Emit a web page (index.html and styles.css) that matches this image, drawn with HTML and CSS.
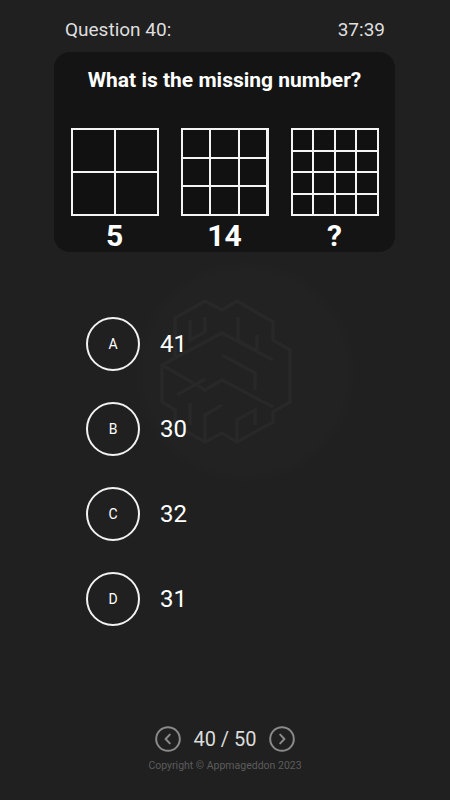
FILE: index.html
```html
<!DOCTYPE html>
<html>
<head>
<meta charset="utf-8">
<link rel="stylesheet" href="styles.css">
</head>
<body>
<div class="screen">
  <div class="watermark">
    <svg viewBox="0 0 145 155" width="145" height="155" fill="none" stroke="#282828" stroke-width="3.5" stroke-linejoin="miter">
      <path d="M50 6 L67 15 L82 6 L118 27 L118 45 L135 55 L135 107 L118 117 L118 127 L82 147 L67 138 L50 147 L20 130 L20 115 L7 107 L7 70 L20 63 L20 23 Z"/>
      <path d="M35 25 L35 45 L50 37 L50 22"/>
      <path d="M83 22 L83 45 L102 56 L102 40"/>
      <path d="M20 63 L67 38 L118 65"/>
      <path d="M7 70 L50 95 L67 85 L118 112"/>
      <path d="M22 100 L50 84"/>
      <path d="M67 60 L100 78 L100 95"/>
      <path d="M50 147 L50 120 L67 110"/>
      <path d="M82 147 L82 125 L100 115 L100 130"/>
      <path d="M35 130 L35 108"/>
    </svg>
  </div>

  <header class="topbar">
    <span class="qnum">Question 40:</span>
    <span class="timer">37:39</span>
  </header>

  <section class="card">
    <h1 class="title">What is the missing number?</h1>
    <div class="figures">
      <div class="figure">
        <div class="grid g2">
          <i></i><i></i><i></i><i></i>
        </div>
        <div class="figval">5</div>
      </div>
      <div class="figure">
        <div class="grid g3">
          <i></i><i></i><i></i><i></i><i></i><i></i><i></i><i></i><i></i>
        </div>
        <div class="figval">14</div>
      </div>
      <div class="figure">
        <div class="grid g4">
          <i></i><i></i><i></i><i></i><i></i><i></i><i></i><i></i>
          <i></i><i></i><i></i><i></i><i></i><i></i><i></i><i></i>
        </div>
        <div class="figval">?</div>
      </div>
    </div>
  </section>

  <ul class="options">
    <li class="option"><span class="letter">A</span><span class="value">41</span></li>
    <li class="option"><span class="letter">B</span><span class="value">30</span></li>
    <li class="option"><span class="letter">C</span><span class="value">32</span></li>
    <li class="option"><span class="letter">D</span><span class="value">31</span></li>
  </ul>

  <footer class="footer">
    <div class="pager">
      <span class="navbtn">
        <svg viewBox="0 0 26 26" width="26" height="26" fill="none" stroke="#8a8a8a" stroke-width="2">
          <circle cx="13" cy="13" r="11.8"/>
          <path d="M14.8 8.6 L10.6 13 L14.8 17.4" stroke-linecap="round" stroke-linejoin="round"/>
        </svg>
      </span>
      <span class="count">40 / 50</span>
      <span class="navbtn">
        <svg viewBox="0 0 26 26" width="26" height="26" fill="none" stroke="#8a8a8a" stroke-width="2">
          <circle cx="13" cy="13" r="11.8"/>
          <path d="M11.2 8.6 L15.4 13 L11.2 17.4" stroke-linecap="round" stroke-linejoin="round"/>
        </svg>
      </span>
    </div>
    <div class="copyright">Copyright © Appmageddon 2023</div>
  </footer>
</div>
</body>
</html>
```

FILE: styles.css
```css
html, body {
  margin: 0;
  padding: 0;
  background: #202020;
}

body {
  font-family: Roboto, "Liberation Sans", sans-serif;
  color: #fff;
}

.screen {
  position: relative;
  width: 450px;
  height: 800px;
  display: flex;
  flex-direction: column;
  overflow: hidden;
  background: radial-gradient(circle at 245px 372px, #222222 0, #222222 100px, #202020 112px);
}

.watermark {
  position: absolute;
  left: 155px;
  top: 295px;
  width: 145px;
  height: 155px;
}

.watermark svg {
  display: block;
}

.topbar {
  display: flex;
  justify-content: space-between;
  padding: 18px 65px 0 65px;
  height: 34px;
  font-size: 19px;
  line-height: 24px;
  color: #dedede;
}

.card {
  position: relative;
  margin: 0 55px 0 54px;
  height: 200px;
  box-sizing: border-box;
  background: #141414;
  border-radius: 16px;
  padding-top: 15px;
}

.title {
  margin: 0;
  text-align: center;
  font-size: 21px;
  line-height: 26px;
  font-weight: 700;
  color: #fff;
}

.figures {
  display: flex;
  justify-content: center;
  gap: 22px;
  margin-top: 35px;
}

.figure {
  display: flex;
  flex-direction: column;
  align-items: center;
}

.grid {
  width: 88px;
  height: 88px;
  box-sizing: border-box;
  display: grid;
  gap: 2px;
  padding: 2px;
  background: #f4f4f4;
}

.grid i {
  background: #111;
}

.g2 { grid-template-columns: repeat(2, 1fr); grid-template-rows: repeat(2, 1fr); }
.g3 { grid-template-columns: repeat(3, 1fr); grid-template-rows: repeat(3, 1fr); }
.g4 { grid-template-columns: repeat(4, 1fr); grid-template-rows: repeat(4, 1fr); }

.figval {
  margin-top: 4px;
  font-size: 30px;
  line-height: 32px;
  font-weight: 700;
  color: #fff;
}

.options {
  position: relative;
  list-style: none;
  margin: 65px 0 0 86px;
  padding: 0;
  display: flex;
  flex-direction: column;
  gap: 31px;
}

.option {
  display: flex;
  align-items: center;
  gap: 20px;
  height: 54px;
}

.letter {
  width: 54px;
  height: 54px;
  box-sizing: border-box;
  border: 2px solid #f2f2f2;
  border-radius: 50%;
  display: flex;
  align-items: center;
  justify-content: center;
  font-size: 14px;
  color: #fff;
}

.value {
  font-size: 24px;
  color: #fff;
}

.footer {
  margin-top: auto;
  padding-bottom: 27px;
  display: flex;
  flex-direction: column;
  align-items: center;
}

.pager {
  display: flex;
  align-items: center;
  gap: 12px;
  height: 26px;
}

.navbtn {
  width: 26px;
  height: 26px;
}

.navbtn svg {
  display: block;
}

.count {
  font-size: 20px;
  line-height: 26px;
  color: #dcdcdc;
}

.copyright {
  margin-top: 7px;
  font-size: 10.5px;
  line-height: 14px;
  color: #5c5c5c;
}
```
